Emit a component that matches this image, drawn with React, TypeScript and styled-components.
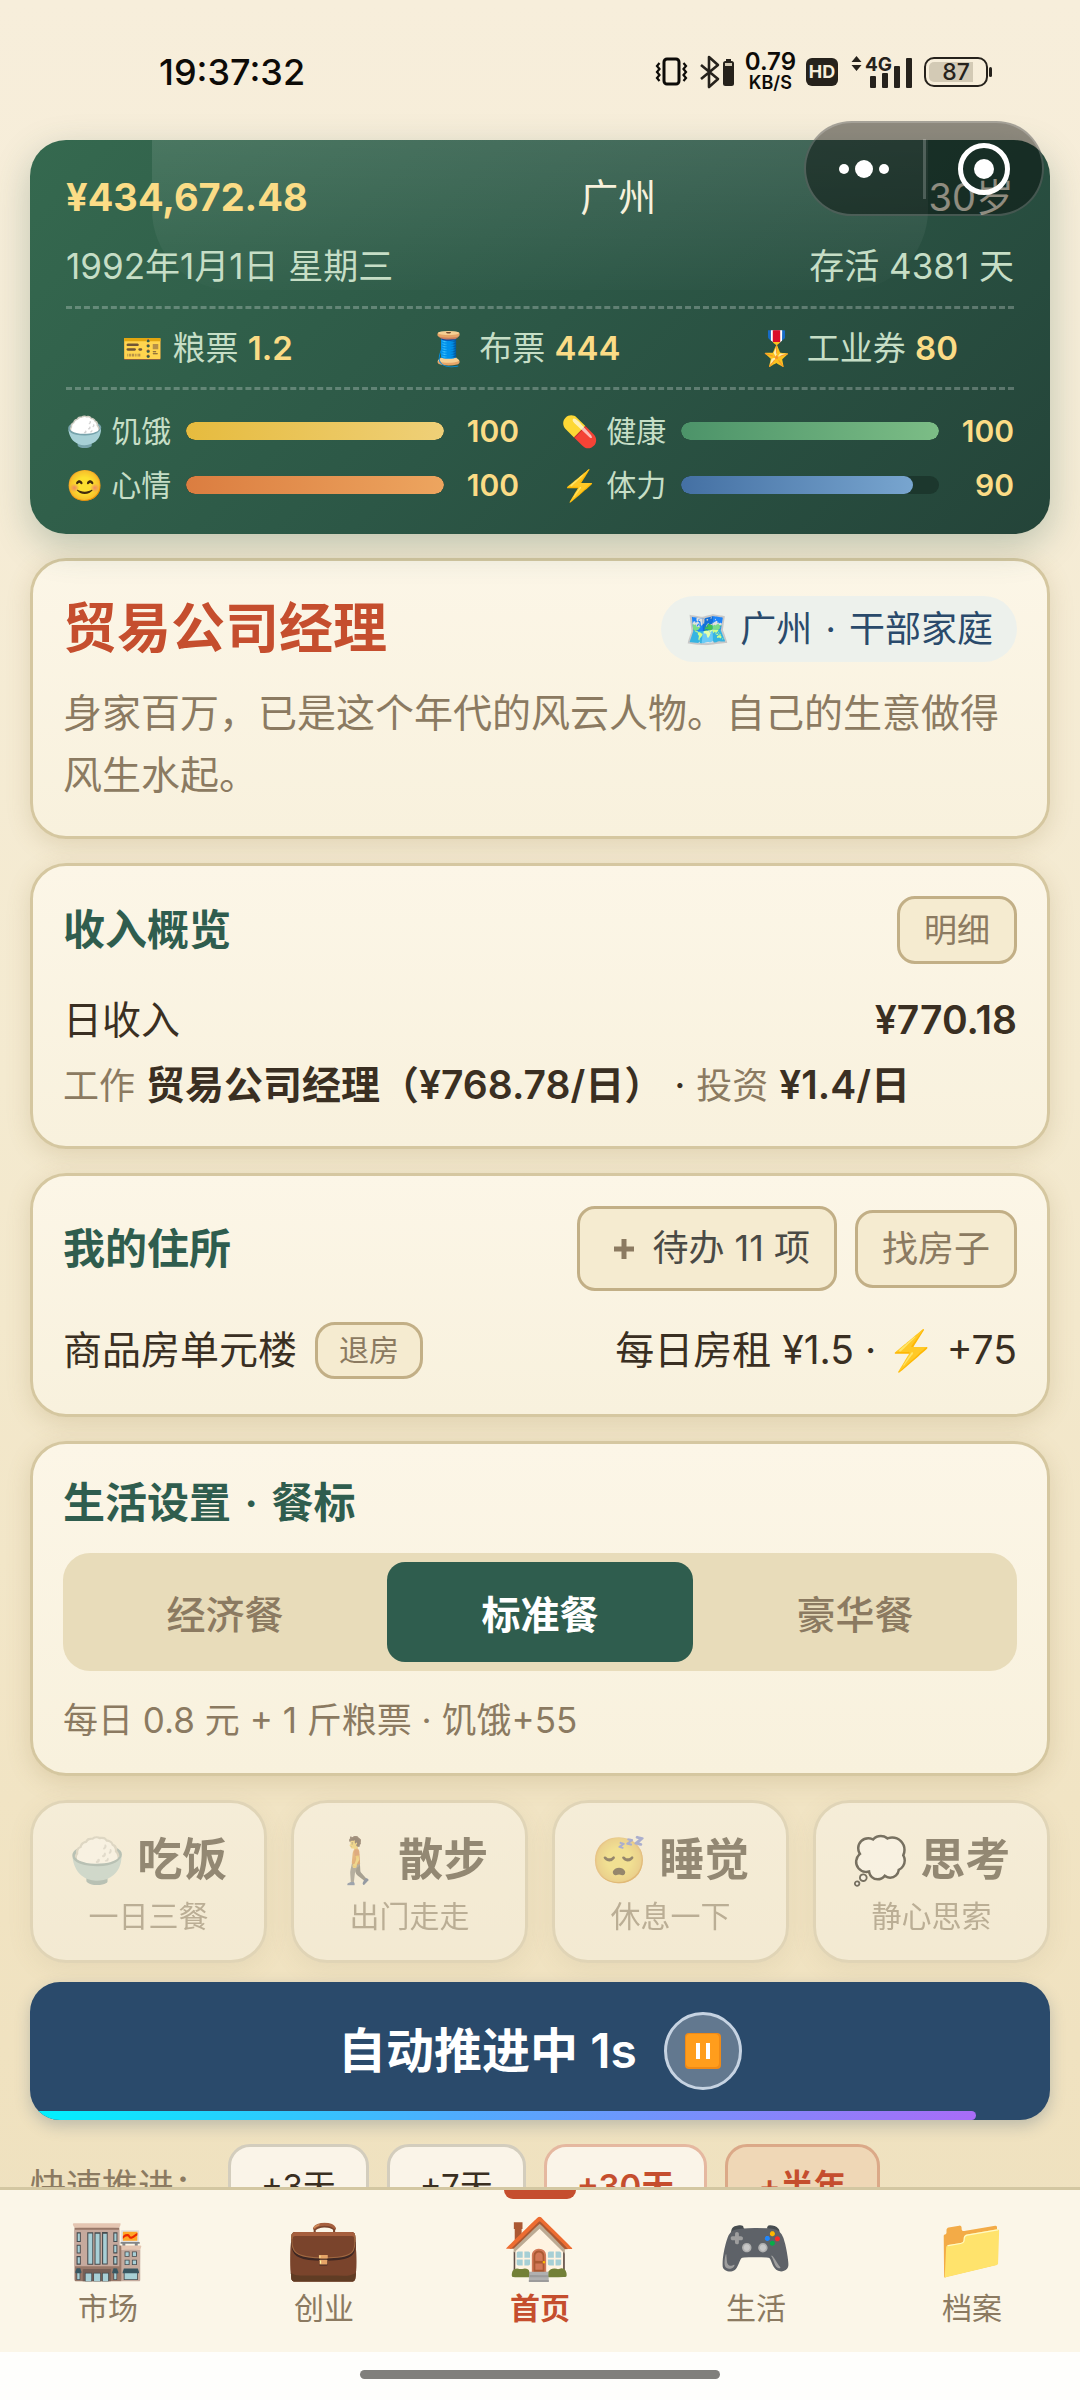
import React, { useState } from "react";
import styled, { createGlobalStyle, css } from "styled-components";

const GlobalStyle = createGlobalStyle`
  *, *::before, *::after { box-sizing: border-box; }
  body {
    margin: 0;
    color: #3a2f22;
    font-family: Inter, "Noto Sans CJK SC", "Noto Color Emoji", sans-serif;
    font-size: 39px;
    line-height: 62px;
  }
  button { font-family: inherit; cursor: pointer; }
  h1, h2, p, dl, dt, dd, ul { margin: 0; padding: 0; }
  ul { list-style: none; }
`;

const c = {
  green: "#2f5d4e",
  red: "#c54e2e",
  navy: "#2a4a6b",
  muted: "#8b7a61",
  gold: "#fbdc86",
  mint: "#c6dec6",
  line: "#d5c7a0",
  tan: "#c2af86",
};

const Screen = styled.div`
  display: flex;
  flex-direction: column;
  height: 100vh;
  overflow: hidden;
  background: linear-gradient(180deg, #f7eedb 0%, #f4ead0 45%, #f0e2c0 85%, #eee1bf 100%);
`;

const StatusBar = styled.header`
  display: flex;
  flex: none;
  align-items: center;
  justify-content: space-between;
  height: 140px;
  padding: 4px 88px 0 159px;
  color: #0d0b08;
  font-size: 36px;
  font-weight: 500;
`;

const StatusIcons = styled.div`
  display: flex;
  align-items: center;
  gap: 10px;
`;

const NetSpeed = styled.span`
  display: grid;
  justify-items: center;
  font-size: 24px;
  line-height: 22px;
  font-weight: 600;

  small { font-size: 18px; line-height: 20px; }
`;

const HdBadge = styled.span`
  width: 32px;
  border-radius: 6px;
  background: #26221c;
  color: #f7eedb;
  font-size: 18px;
  line-height: 28px;
  font-weight: 700;
  text-align: center;
`;

const Battery = styled.span`
  position: relative;
  width: 64px;
  margin-right: 4px;
  padding: 3px;
  border: 2px solid #26221c;
  border-radius: 10px;
  color: #26221c;
  font-size: 23px;
  line-height: 20px;
  text-align: center;
  background: linear-gradient(90deg, #d3cab5 82%, transparent 82%) content-box;

  &::after {
    content: "";
    position: absolute;
    top: 8px;
    right: -6px;
    width: 3px;
    height: 10px;
    border-radius: 2px;
    background: #26221c;
  }
`;

const Capsule = styled.div`
  position: fixed;
  z-index: 5;
  top: 121px;
  right: 36px;
  display: flex;
  align-items: center;
  width: 240px;
  height: 95px;
  border: 2px solid rgba(255, 255, 255, 0.2);
  border-radius: 48px;
  background: rgba(0, 0, 0, 0.42);
`;

const CapsuleButton = styled.button`
  display: grid;
  flex: 1;
  place-items: center;
  height: 60px;
  padding: 0;
  border: 0;
  background: none;

  & + & { border-left: 3px solid rgba(255, 255, 255, 0.2); }
`;

const Content = styled.main`
  display: flex;
  flex: 1;
  flex-direction: column;
  gap: 24px;
  min-height: 0;
  padding: 0 30px;
`;

const Summary = styled.section`
  position: relative;
  flex: none;
  padding: 26px 36px 25px;
  border-radius: 36px;
  background: linear-gradient(135deg, #35694f 0%, #2c5746 50%, #244439 100%);
  box-shadow: 0 12px 36px rgba(47, 93, 78, 0.28);
  color: ${c.mint};

  &::before {
    content: "";
    position: absolute;
    top: 0;
    left: 12%;
    right: 12%;
    height: 150px;
    border-radius: 0 0 80px 80px;
    background: linear-gradient(180deg, rgba(255, 255, 255, 0.11), rgba(255, 255, 255, 0.01));
  }
`;

const SummaryRow = styled.div<{ $small?: boolean }>`
  position: relative;
  display: flex;
  align-items: center;
  justify-content: space-between;
  margin-top: ${(p) => (p.$small ? "9px" : "0")};
  color: ${(p) => (p.$small ? c.mint : "#f7f1dc")};
  font-size: ${(p) => (p.$small ? "35px" : "38px")};
  line-height: ${(p) => (p.$small ? "58px" : "62px")};
`;

const Money = styled.strong`
  color: ${c.gold};
  font-weight: 700;
`;

const Tickets = styled.ul`
  display: flex;
  justify-content: space-around;
  gap: 24px;
  margin: 11px 0 17px;
  padding: 12px 0;
  border: dashed rgba(255, 255, 255, 0.25);
  border-width: 3px 0;
  font-size: 33px;
  line-height: 54px;
`;

const TicketValue = styled.strong`
  color: ${c.gold};
  font-size: 33px;
  font-weight: 600;
`;

const Stats = styled.div`
  display: grid;
  grid-template-columns: 1fr 1fr;
  gap: 6px 42px;
`;

const Stat = styled.div`
  display: grid;
  grid-template-columns: 105px 1fr 60px;
  align-items: center;
  column-gap: 15px;
  font-size: 30px;
  line-height: 48px;
`;

const StatLabel = styled.span`
  display: flex;
  gap: 8px;
  white-space: nowrap;
`;

const Track = styled.div`
  height: 18px;
  overflow: hidden;
  border-radius: 9px;
  background: #1c372d;
`;

const Fill = styled.div<{ $from: string; $to: string }>`
  height: 100%;
  border-radius: 9px;
  background: linear-gradient(90deg, ${(p) => p.$from}, ${(p) => p.$to});
`;

const StatValue = styled.strong`
  color: ${c.gold};
  font-weight: 600;
  text-align: right;
`;

const surface = css`
  border: 3px solid ${c.line};
  border-radius: 36px;
  background: linear-gradient(180deg, #fcf6e7, #f8f1dd);
  box-shadow: 0 6px 24px rgba(139, 115, 60, 0.2);
`;

const Card = styled.section`
  ${surface}
  flex: none;
  padding: 30px;
`;

const Row = styled.div<{ $after?: number; $min?: number }>`
  display: flex;
  align-items: center;
  justify-content: space-between;
  min-height: ${(p) => p.$min ?? 0}px;
  margin-bottom: ${(p) => p.$after ?? 0}px;
`;

const Inline = styled.div`
  display: flex;
  align-items: center;
  gap: 18px;
`;

const JobTitle = styled.h1`
  color: ${c.red};
  font-size: 54px;
  line-height: 76px;
  font-weight: 700;
`;

const CardTitle = styled.h2`
  color: ${c.green};
  font-size: 42px;
  line-height: 58px;
  font-weight: 600;
`;

const Dot = styled.span`
  margin: 0 3px;
`;

const Origin = styled.span`
  padding: 0 24px;
  border-radius: 33px;
  background: #edf1ec;
  color: ${c.navy};
  font-size: 36px;
  line-height: 66px;
`;

const Description = styled.p`
  color: ${c.muted};
`;

const Muted = styled.span`
  color: ${c.muted};
  font-size: 36px;
  line-height: 36px;
`;

const Hint = styled.p`
  margin-top: 26px;
  color: ${c.muted};
  font-size: 35px;
  line-height: 46px;
`;

const Strong = styled.strong`
  font-weight: 600;
`;

const sizes = {
  small: css`padding: 0 21px; border-radius: 20px; font-size: 30px; line-height: 51px;`,
  medium: css`padding: 0 24px; border-radius: 18px; font-size: 33px; line-height: 62px;`,
  large: css`padding: 0 24px; border-radius: 18px; font-size: 36px; line-height: 72px;`,
  tall: css`padding: 0 24px; border-radius: 18px; font-size: 36px; line-height: 79px;`,
};

const SoftButton = styled.button<{ $size: keyof typeof sizes }>`
  border: 3px solid ${c.tan};
  background: #f5ebd0;
  color: ${c.muted};
  white-space: nowrap;
  ${(p) => sizes[p.$size]}
`;

const Todo = styled.span`
  display: flex;
  align-items: center;
  gap: 18px;
  color: #4a4a45;

  svg { margin-left: 10px; }
`;

const Segments = styled.div`
  display: grid;
  grid-template-columns: repeat(3, 1fr);
  gap: 9px;
  margin-top: 21px;
  padding: 9px;
  border-radius: 27px;
  background: #e8dcba;
`;

const Segment = styled.button<{ $on: boolean }>`
  height: 100px;
  border: 0;
  border-radius: 18px;
  background: ${(p) => (p.$on ? c.green : "transparent")};
  color: ${(p) => (p.$on ? "#fff" : c.muted)};
  font-size: 39px;
  font-weight: ${(p) => (p.$on ? 700 : 500)};
`;

const Actions = styled.div`
  display: grid;
  flex: none;
  grid-template-columns: repeat(4, 1fr);
  gap: 24px;
`;

const Action = styled.button`
  ${surface}
  display: grid;
  justify-items: center;
  align-content: center;
  height: 163px;
  padding: 5px 0 0;
  color: ${c.muted};
  font-size: 30px;
  line-height: 48px;
  opacity: 0.5;
  filter: grayscale(0.3);

  strong {
    color: #3a2f22;
    font-size: 45px;
    line-height: 64px;
    font-weight: 600;
    white-space: nowrap;
  }
`;

const AutoPanel = styled.section`
  position: relative;
  display: flex;
  flex: none;
  align-items: center;
  justify-content: center;
  gap: 27px;
  height: 138px;
  margin-top: -5px;
  overflow: hidden;
  border-radius: 30px;
  background: ${c.navy};
  box-shadow: 0 6px 15px rgba(42, 74, 107, 0.25);
  color: #fff;
  font-size: 48px;
  font-weight: 600;
`;

const PauseButton = styled.button`
  display: grid;
  place-items: center;
  width: 78px;
  height: 78px;
  padding: 0;
  border: 3px solid #c6d3e2;
  border-radius: 50%;
  background: #62788f;
`;

const AutoProgress = styled.div`
  position: absolute;
  left: 0;
  bottom: 0;
  height: 9px;
  border-radius: 0 5px 5px 0;
  background: linear-gradient(90deg, #00f2fe, #4facfe 45%, #a96cf8);
`;

const QuickRow = styled.div`
  display: flex;
  flex: none;
  align-items: center;
  gap: 18px;
  color: ${c.muted};
  font-size: 36px;
`;

const QuickLabel = styled.span`
  width: 180px;
  white-space: nowrap;
`;

const tones = {
  plain: css`border-color: #d3cdbd; background: #faf4e8; color: #3a2f22;`,
  warm: css`border-color: #e5b8a0; background: #faf4e8; color: ${c.red}; font-weight: 600;`,
  hot: css`border-color: #dba988; background: #efd7b6; color: ${c.red}; font-weight: 600;`,
};

const QuickButton = styled.button<{ $tone: keyof typeof tones }>`
  padding: 0 30px;
  border: 3px solid;
  border-radius: 22px;
  font-size: 33px;
  line-height: 79px;
  white-space: nowrap;
  ${(p) => tones[p.$tone]}
`;

const NavBar = styled.nav`
  position: relative;
  display: grid;
  flex: none;
  grid-template-columns: repeat(5, 1fr);
  height: 165px;
  border-top: 3px solid #d3c7a2;
  background: #fbf6e8;
`;

const NavItem = styled.a<{ $on?: boolean }>`
  position: relative;
  display: grid;
  justify-items: center;
  align-content: start;
  padding-top: 21px;
  color: ${(p) => (p.$on ? c.red : c.muted)};
  font-size: 30px;
  line-height: 50px;
  font-weight: ${(p) => (p.$on ? 700 : 400)};
  text-decoration: none;

  &::before {
    content: "";
    position: absolute;
    top: 0;
    width: 72px;
    height: 9px;
    border-radius: 0 0 9px 9px;
    background: ${(p) => (p.$on ? c.red : "transparent")};
  }
`;

const NavIcon = styled.span`
  font-size: 60px;
  line-height: 72px;
`;

const HomeBar = styled.footer`
  display: grid;
  flex: none;
  justify-items: center;
  align-content: center;
  height: 48px;
  padding-bottom: 3px;
  background: #fefefc;

  &::before {
    content: "";
    width: 360px;
    height: 9px;
    border-radius: 5px;
    background: #807f7c;
  }
`;

const stats = [
  { icon: "🍚", label: "饥饿", value: 100, from: "#e6bb3e", to: "#efd078" },
  { icon: "💊", label: "健康", value: 100, from: "#4c9369", to: "#7cbd86" },
  { icon: "😊", label: "心情", value: 100, from: "#db7d40", to: "#eda55f" },
  { icon: "⚡", label: "体力", value: 90, from: "#4470a3", to: "#78a5cf" },
];

const tickets = [
  { icon: "🎫", label: "粮票", value: "1.2" },
  { icon: "🧵", label: "布票", value: "444" },
  { icon: "🎖️", label: "工业券", value: "80" },
];

const meals = ["经济餐", "标准餐", "豪华餐"];

const actions = [
  { icon: "🍚", name: "吃饭", note: "一日三餐" },
  { icon: "🚶", name: "散步", note: "出门走走" },
  { icon: "😴", name: "睡觉", note: "休息一下" },
  { icon: "💭", name: "思考", note: "静心思索" },
];

const jumps: { label: string; tone: keyof typeof tones }[] = [
  { label: "+3天", tone: "plain" },
  { label: "+7天", tone: "plain" },
  { label: "+30天", tone: "warm" },
  { label: "+半年", tone: "hot" },
];

const pages = [
  { icon: "🏬", label: "市场" },
  { icon: "💼", label: "创业" },
  { icon: "🏠", label: "首页", on: true },
  { icon: "🎮", label: "生活" },
  { icon: "📁", label: "档案" },
];

const VibrateIcon = () => (
  <svg width="34" height="30" viewBox="0 0 34 30" fill="none" stroke="#0d0b08" aria-hidden="true">
    <rect x="9" y="2" width="15" height="25" rx="3" strokeWidth="3" />
    <path d="M4.500 6l-2.500 3 2.500 3-2.500 3 2.500 3-2.500 3 2.500 3M28.500 6l2.500 3-2.500 3 2.500 3-2.500 3 2.500 3-2.500 3" strokeWidth="2.200" />
  </svg>
);

const BluetoothIcon = () => (
  <svg width="36" height="34" viewBox="0 0 36 34" aria-hidden="true">
    <path d="M2 10l17 14-9 8V2l9 8L2 24" fill="none" stroke="#26221c" strokeWidth="2.600" strokeLinejoin="round" />
    <rect x="24" y="6" width="11" height="25" rx="2.500" fill="#26221c" />
    <rect x="27" y="4" width="5" height="2" fill="#26221c" />
    <rect x="26" y="8" width="7" height="3" fill="#d3cab5" />
  </svg>
);

const SignalIcon = () => (
  <svg width="66" height="44" viewBox="-4 -5 66 44" fill="#26221c" aria-hidden="true">
    <path d="M4.500 1l5 6h-10zM4.500 16l5-6h-10z" />
    <text x="13" y="16" fontSize="19" fontWeight="700">4G</text>
    <rect x="18" y="21" width="6" height="12" rx="1" />
    <rect x="30" y="18" width="6" height="15" rx="1" />
    <rect x="42" y="11" width="6" height="22" rx="1" />
    <rect x="54" y="3" width="6" height="30" rx="1" />
  </svg>
);

export default function App() {
  const [meal, setMeal] = useState("标准餐");
  return (
    <Screen>
      <GlobalStyle />
      <StatusBar>
        <time>19:37:32</time>
        <StatusIcons>
          <VibrateIcon />
          <BluetoothIcon />
          <NetSpeed>0.79<small>KB/S</small></NetSpeed>
          <HdBadge>HD</HdBadge>
          <SignalIcon />
          <Battery>87</Battery>
        </StatusIcons>
      </StatusBar>
      <Capsule>
        <CapsuleButton aria-label="更多">
          <svg width="54" height="54" viewBox="0 0 54 54" fill="#fff" aria-hidden="true">
            <circle cx="7" cy="27" r="5" />
            <circle cx="27" cy="27" r="9" />
            <circle cx="47" cy="27" r="5" />
          </svg>
        </CapsuleButton>
        <CapsuleButton aria-label="关闭">
          <svg width="54" height="54" viewBox="0 0 54 54" aria-hidden="true">
            <circle cx="27" cy="27" r="23.500" fill="none" stroke="#fff" strokeWidth="5" />
            <circle cx="27" cy="27" r="10" fill="#fff" />
          </svg>
        </CapsuleButton>
      </Capsule>

      <Content>
        <Summary>
          <SummaryRow>
            <Money>¥434,672.48</Money>
            <span>广州</span>
            <span>30岁</span>
          </SummaryRow>
          <SummaryRow $small>
            <span>1992年1月1日 星期三</span>
            <span>存活 4381 天</span>
          </SummaryRow>
          <Tickets>
            {tickets.map((t) => (
              <li key={t.label}>
                {t.icon} {t.label} <TicketValue>{t.value}</TicketValue>
              </li>
            ))}
          </Tickets>
          <Stats>
            {stats.map((s) => (
              <Stat key={s.label}>
                <StatLabel>
                  <span>{s.icon}</span>
                  <span>{s.label}</span>
                </StatLabel>
                <Track>
                  <Fill $from={s.from} $to={s.to} style={{ width: `${s.value}%` }} />
                </Track>
                <StatValue>{s.value}</StatValue>
              </Stat>
            ))}
          </Stats>
        </Summary>

        <Card>
          <Row $after={15}>
            <JobTitle>贸易公司经理</JobTitle>
            <Origin>🗺️ 广州 <Dot>·</Dot> 干部家庭</Origin>
          </Row>
          <Description>身家百万，已是这个年代的风云人物。自己的生意做得风生水起。</Description>
        </Card>

        <Card>
          <Row $after={25}>
            <CardTitle>收入概览</CardTitle>
            <SoftButton $size="medium">明细</SoftButton>
          </Row>
          <Row $after={3}>
            <span>日收入</span>
            <Strong>¥770.18</Strong>
          </Row>
          <div>
            <Muted>工作</Muted> <Strong>贸易公司经理（¥768.78/日）</Strong> · <Muted>投资</Muted> <Strong>¥1.4/日</Strong>
          </div>
        </Card>

        <Card>
          <Row $after={25}>
            <CardTitle>我的住所</CardTitle>
            <Inline>
              <SoftButton $size="tall">
                <Todo>
                  <svg width="20" height="20" viewBox="0 0 20 20" aria-hidden="true">
                    <path d="M10 0v20M0 10h20" stroke="#8b7a61" strokeWidth="5" />
                  </svg>
                  待办 11 项
                </Todo>
              </SoftButton>
              <SoftButton $size="large">找房子</SoftButton>
            </Inline>
          </Row>
          <Row $min={68}>
            <Inline>
              <span>商品房单元楼</span>
              <SoftButton $size="small">退房</SoftButton>
            </Inline>
            <span>每日房租 ¥1.5 · ⚡ +75</span>
          </Row>
        </Card>

        <Card>
          <CardTitle>生活设置 <Dot>·</Dot> 餐标</CardTitle>
          <Segments>
            {meals.map((m) => (
              <Segment key={m} $on={m === meal} aria-pressed={m === meal} onClick={() => setMeal(m)}>
                {m}
              </Segment>
            ))}
          </Segments>
          <Hint>每日 0.8 元 + 1 斤粮票 · 饥饿+55</Hint>
        </Card>

        <Actions>
          {actions.map((a) => (
            <Action key={a.name} disabled>
              <strong>{a.icon} {a.name}</strong>
              <span>{a.note}</span>
            </Action>
          ))}
        </Actions>

        <AutoPanel>
          <span>自动推进中 1s</span>
          <PauseButton aria-label="暂停">
            <svg width="38" height="38" viewBox="0 0 38 38" aria-hidden="true">
              <rect x="1" y="1" width="36" height="36" rx="4" fill="#f08a16" />
              <rect x="2" y="2" width="33" height="33" rx="4" fill="#ff9d1c" />
              <path d="M14 11v16M24 11v16" stroke="#fff" strokeWidth="4" />
            </svg>
          </PauseButton>
          <AutoProgress style={{ width: "92.700%" }} />
        </AutoPanel>

        <QuickRow>
          <QuickLabel>快速推进：</QuickLabel>
          {jumps.map((j) => (
            <QuickButton key={j.label} $tone={j.tone}>{j.label}</QuickButton>
          ))}
        </QuickRow>
      </Content>

      <NavBar>
        {pages.map((p) => (
          <NavItem key={p.label} href="#" $on={p.on}>
            <NavIcon>{p.icon}</NavIcon>
            {p.label}
          </NavItem>
        ))}
      </NavBar>
      <HomeBar />
    </Screen>
  );
}
